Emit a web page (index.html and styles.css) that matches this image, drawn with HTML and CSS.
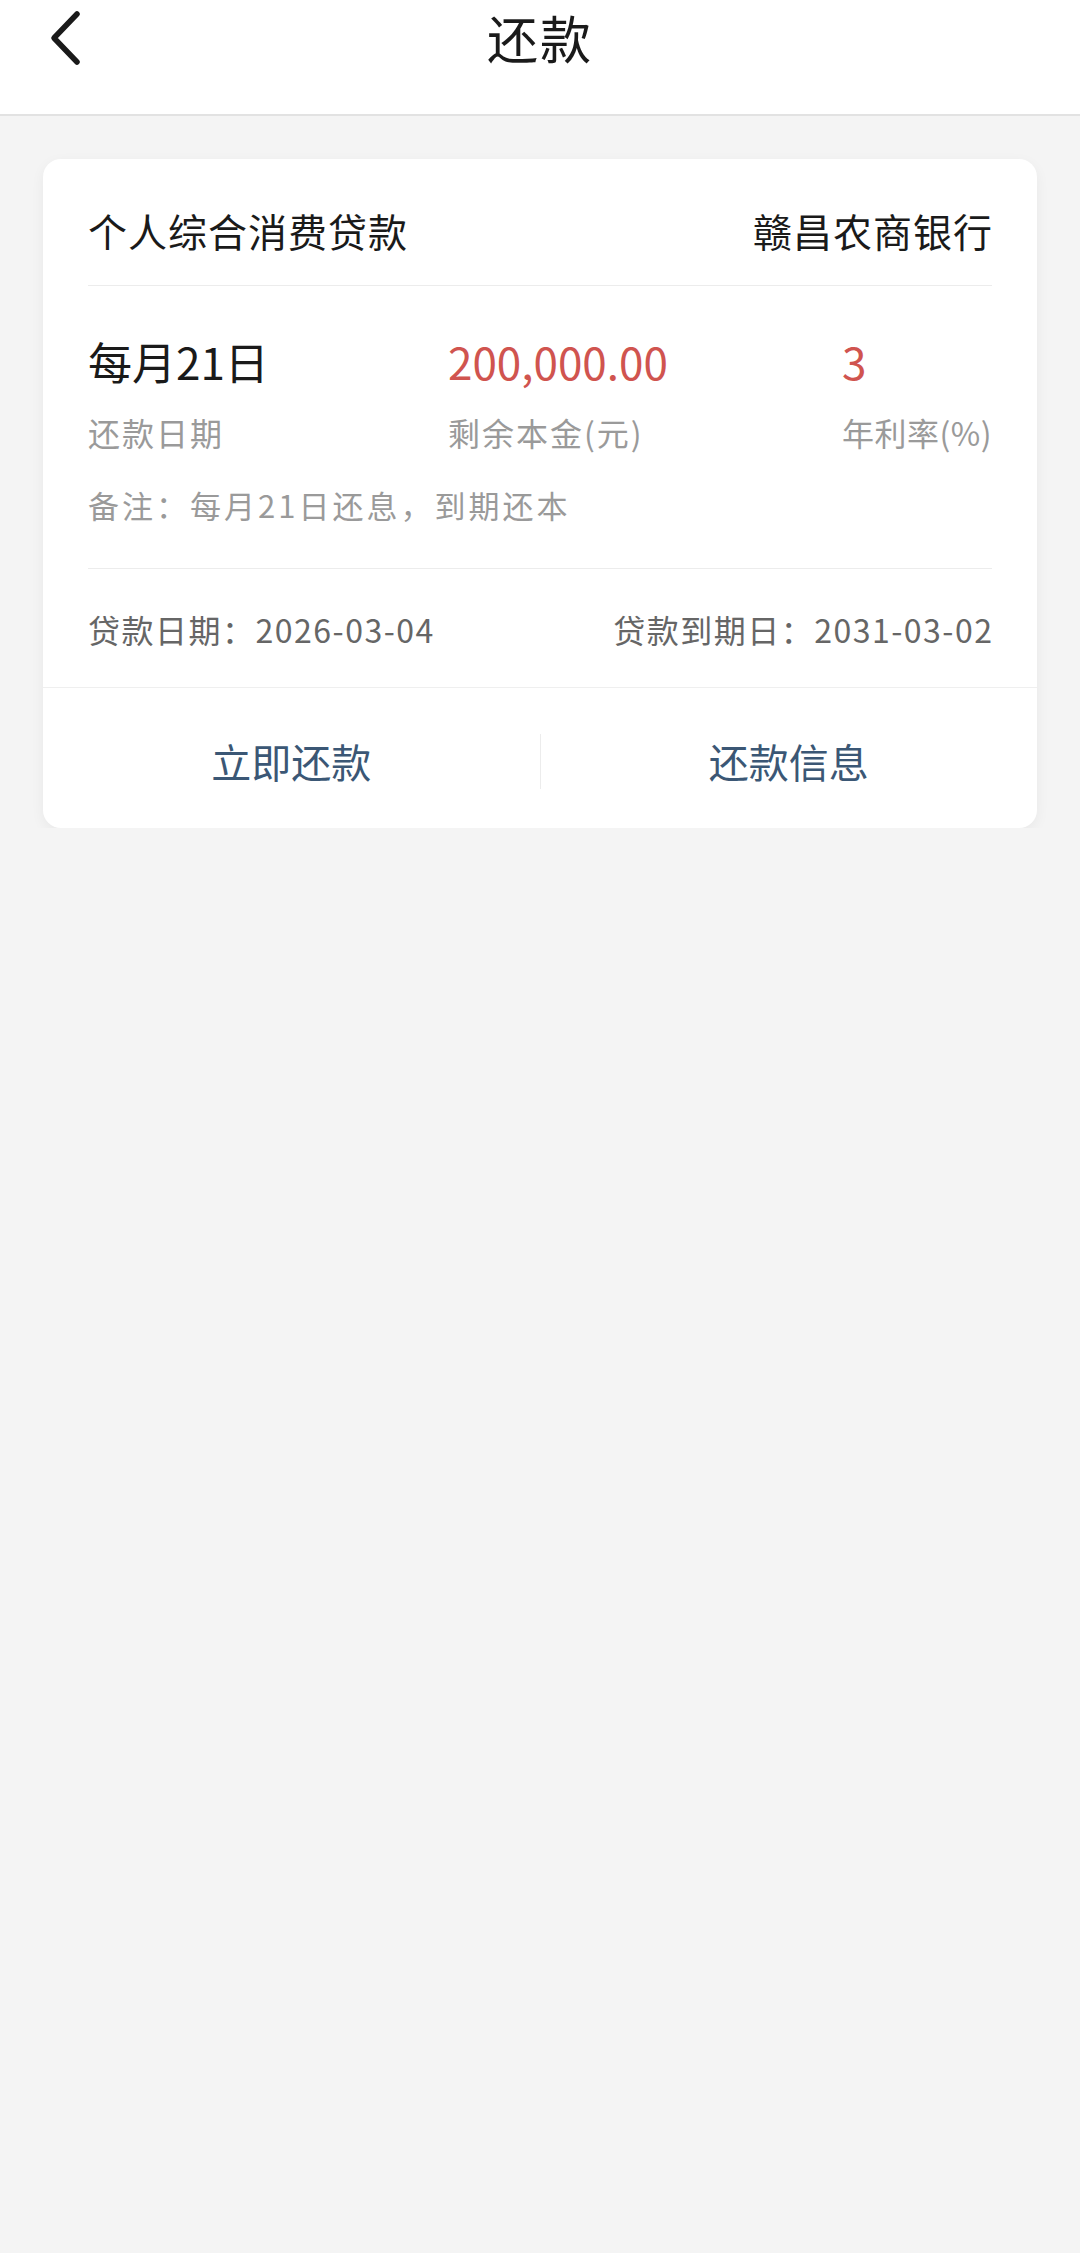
FILE: index.html
```html
<!DOCTYPE html>
<html lang="zh-CN">

<head>
  <meta charset="UTF-8" />
  <meta name="viewport" content="width=device-width, initial-scale=1" />
  <title>还款</title>
  <link rel="stylesheet" href="styles.css">
</head>

<body>

  <header class="topbar">
    <button class="back" aria-label="返回">
      <svg width="34" height="56" viewBox="0 0 34 56">
        <path d="M29 4 L6 28 L29 52" fill="none" stroke="#1a1a1a" stroke-width="5.5" stroke-linecap="round" stroke-linejoin="round" />
      </svg>
    </button>
    <h1>还款</h1>
  </header>

  <main class="page">
    <div class="card">
      <div class="card-head">
        <span>个人综合消费贷款</span>
        <span>赣昌农商银行</span>
      </div>

      <div class="card-body">
        <div class="stats">
          <div class="stat">
            <div class="value">每月21日</div>
            <div class="label">还款日期</div>
          </div>
          <div class="stat">
            <div class="value red">200,000.00</div>
            <div class="label">剩余本金(元)</div>
          </div>
          <div class="stat">
            <div class="value red">3</div>
            <div class="label">年利率(%)</div>
          </div>
        </div>
        <div class="note">备注：每月21日还息，到期还本</div>
      </div>

      <div class="dates">
        <span>贷款日期：2026-03-04</span>
        <span>贷款到期日：2031-03-02</span>
      </div>

      <div class="actions">
        <button>立即还款</button>
        <span class="sep"></span>
        <button>还款信息</button>
      </div>
    </div>
  </main>

</body>

</html>
```

FILE: styles.css
```css
html,
body {
  margin: 0;
  padding: 0;
  width: 100%;
  min-height: 100%;
  font-family: "Noto Sans CJK SC", "Noto Sans", sans-serif;
  background: #f4f4f4;
  color: #1a1a1a;
}

.topbar {
  position: relative;
  height: 116px;
  background: #ffffff;
  border-bottom: 2px solid #e2e2e2;
  box-sizing: border-box;
}

.topbar h1 {
  margin: 0;
  text-align: center;
  font-size: 51px;
  font-weight: 400;
  line-height: 74px;
  letter-spacing: 2px;
}

.back {
  position: absolute;
  left: 48px;
  top: 10px;
  padding: 0;
  border: none;
  background: none;
}

.back svg {
  display: block;
}

.page {
  padding: 43px 43px 0;
}

.card {
  background: #ffffff;
  border-radius: 18px;
  box-shadow: 0 4px 14px rgba(0, 0, 0, 0.05);
  overflow: hidden;
}

.card-head {
  display: flex;
  justify-content: space-between;
  margin: 0 45px;
  padding: 50px 0 34px;
  font-size: 39px;
  line-height: 42px;
  letter-spacing: 1px;
  border-bottom: 1px solid #ececec;
}

.card-head span:last-child {
  margin-right: -1px;
}

.card-body {
  margin: 0 45px;
  padding: 50px 0 43px;
  border-bottom: 1px solid #ececec;
}

.stats {
  display: grid;
  grid-template-columns: 360px 394px 1fr;
  white-space: nowrap;
}

.value {
  font-size: 44px;
  line-height: 50px;
}

.value.red {
  color: #d0544f;
}

.label {
  margin-top: 26px;
  font-size: 32px;
  line-height: 40px;
  letter-spacing: 2px;
  color: #9a9a9a;
}

.stat:last-child .label {
  letter-spacing: 0.5px;
}

.note {
  margin-top: 33px;
  font-size: 31px;
  line-height: 40px;
  letter-spacing: 3px;
  color: #9a9a9a;
}

.dates {
  display: flex;
  justify-content: space-between;
  margin: 0 45px;
  padding: 40px 0 38px;
  font-size: 32px;
  line-height: 40px;
  letter-spacing: 1.5px;
  color: #666666;
}

.dates span:last-child {
  margin-right: -1.5px;
}

.actions {
  display: flex;
  align-items: center;
  height: 140px;
  border-top: 1px solid #efefef;
}

.actions button {
  flex: 1;
  padding: 6px 0 0;
  border: none;
  background: none;
  font-family: inherit;
  font-size: 40px;
  color: #3b5775;
  cursor: pointer;
}

.sep {
  width: 1px;
  height: 55px;
  margin-top: 6px;
  background: #ececec;
}
```
